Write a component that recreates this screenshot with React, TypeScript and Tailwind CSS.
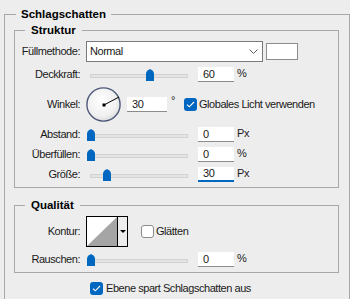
import React from 'react';

const Slider = ({ pos }: { pos: number }) => (
  <div className="relative ml-px h-[15px] w-[101px] shrink-0">
    <div className="absolute left-[3px] right-0 top-[7px] h-[4px] border border-[#d2d2d2] bg-[#e4e4e4]" />
    <svg
      className="absolute top-[2px]"
      style={{ left: pos }}
      width="8"
      height="12"
      viewBox="0 0 8 12"
    >
      <path d="M0 4.5 Q0 2.5 2 1.2 L4 0 L6 1.2 Q8 2.5 8 4.5 V12 H0 Z" fill="#0067c0" />
    </svg>
  </div>
);

const NumInput = ({
  value,
  width = 'w-[36px]',
  focused = false,
}: {
  value: string;
  width?: string;
  focused?: boolean;
}) => (
  <div
    className={`flex h-[15px] shrink-0 items-center bg-white pl-[5px] leading-none ${width} ${
      focused ? 'border-b-2 border-[#0067c0]' : 'border-b border-[#8c8c8c]'
    }`}
  >
    {value}
  </div>
);

const Check = ({ checked }: { checked: boolean }) =>
  checked ? (
    <div className="flex h-[13px] w-[13px] shrink-0 items-center justify-center rounded-[3px] bg-[#0067c0]">
      <svg width="9" height="7" viewBox="0 0 9 7">
        <path d="M1 3.6 L3.3 5.8 L8 1" fill="none" stroke="white" strokeWidth="1.1" />
      </svg>
    </div>
  ) : (
    <div className="h-[13px] w-[13px] shrink-0 rounded-[3px] border border-[#8c8c8c] bg-white" />
  );

const Label = ({ children }: { children: React.ReactNode }) => (
  <div className="w-[67px] shrink-0 pr-[2px] text-right">{children}</div>
);

const SliderRow = ({
  label,
  pos,
  value,
  unit,
  focused,
}: {
  label: string;
  pos: number;
  value: string;
  unit: string;
  focused?: boolean;
}) => (
  <div className="mt-[5px] flex h-[15px] items-center">
    <Label>{label}</Label>
    <div className="ml-[4px] flex items-center">
      <Slider pos={pos} />
      <div className="ml-[10px]">
        <NumInput value={value} focused={focused} />
      </div>
      <span className="ml-[3px] -mt-[3px]">{unit}</span>
    </div>
  </div>
);

const App = () => {
  return (
    <div className="h-[299px] overflow-hidden bg-[#ededed] pl-[4px] pt-[6px] font-['Liberation_Sans',Arial,sans-serif] text-[11px] tracking-[-0.45px] text-[#1a1a1a]">
      <fieldset className="w-[346px] border border-[#a8a8a8] pb-[12px]">
        <legend className="ml-[11px] px-[5px] text-[11.5px] font-bold leading-[16px] tracking-normal text-black">
          Schlagschatten
        </legend>

        <fieldset className="ml-[9px] w-[325px] border border-[#a8a8a8] pb-[5px]">
          <legend className="ml-[10px] px-[6px] text-[11.5px] font-bold leading-[16px] tracking-normal text-black">
            Struktur
          </legend>

          <div className="mt-[3px] flex h-[21px] items-center">
            <Label>Füllmethode:</Label>
            <div className="ml-[4px] flex h-[21px] w-[177px] items-center justify-between border border-[#7a7a7a] bg-white pl-[3px] pr-[4px]">
              <span>Normal</span>
              <svg width="9" height="5" viewBox="0 0 9 5">
                <path d="M0.5 0.5 L4.5 4.5 L8.5 0.5" fill="none" stroke="#606060" strokeWidth="1" />
              </svg>
            </div>
            <div className="ml-[3px] h-[17px] w-[32px] border border-[#8c8c8c] bg-white" />
          </div>

          <SliderRow label="Deckkraft:" pos={59} value="60" unit="%" />

          <div className="mt-[5px] flex h-[35px] items-center">
            <Label>Winkel:</Label>
            <svg className="ml-[4px] shrink-0" width="35" height="35" viewBox="0 0 35 35">
              <defs>
                <radialGradient id="dial" cx="45%" cy="40%" r="65%">
                  <stop offset="0%" stopColor="#ffffff" />
                  <stop offset="70%" stopColor="#f0f0f0" />
                  <stop offset="100%" stopColor="#d6d6d6" />
                </radialGradient>
              </defs>
              <circle cx="17.5" cy="17.5" r="16.6" fill="url(#dial)" stroke="#4c5878" strokeWidth="1.4" />
              <line x1="18" y1="18" x2="33" y2="10" stroke="black" strokeWidth="1" />
              <rect x="16.5" y="16.5" width="3" height="3" fill="black" />
            </svg>
            <div className="ml-[6px]">
              <NumInput value="30" width="w-[40px]" />
            </div>
            <span className="ml-[4px] w-[13px] -mt-[8px]">°</span>
            <Check checked />
            <span className="ml-[2px]">Globales Licht verwenden</span>
          </div>

          <SliderRow label="Abstand:" pos={0} value="0" unit="Px" />
          <SliderRow label="Überfüllen:" pos={0} value="0" unit="%" />
          <SliderRow label="Größe:" pos={16} value="30" unit="Px" focused />
        </fieldset>

        <fieldset className="ml-[9px] mt-[9px] w-[325px] border border-[#a8a8a8] pb-[5px]">
          <legend className="ml-[10px] px-[6px] text-[11.5px] font-bold leading-[16px] tracking-normal text-black">
            Qualität
          </legend>

          <div className="mt-[3px] flex h-[31px] items-center">
            <Label>Kontur:</Label>
            <div className="ml-[4px] flex h-[31px] w-[42px] border border-black bg-white">
              <svg width="30" height="29" viewBox="0 0 30 29">
                <polygon points="0,29 30,0 30,29" fill="#a5a5a5" />
              </svg>
              <div className="flex flex-1 items-center justify-center border-l border-black bg-[#ededed]">
                <svg width="6" height="3" viewBox="0 0 6 3">
                  <polygon points="0,0 6,0 3,3" fill="black" />
                </svg>
              </div>
            </div>
            <div className="ml-[13px]">
              <Check checked={false} />
            </div>
            <span className="ml-[2px]">Glätten</span>
          </div>

          <SliderRow label="Rauschen:" pos={0} value="0" unit="%" />
        </fieldset>

        <div className="ml-[85px] mt-[9px] flex h-[13px] items-center">
          <Check checked />
          <span className="ml-[3px]">Ebene spart Schlagschatten aus</span>
        </div>
      </fieldset>
    </div>
  );
};

export default App;
